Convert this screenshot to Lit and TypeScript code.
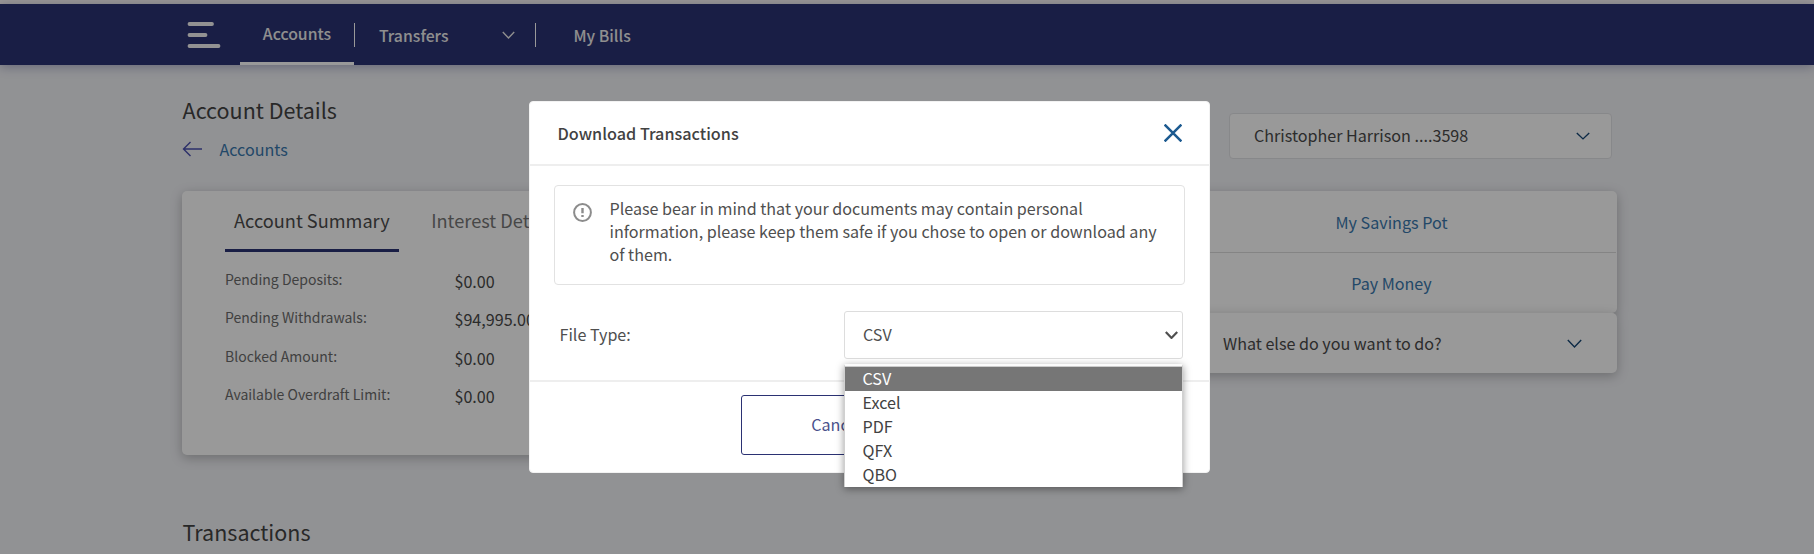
import { LitElement, html, css, svg } from "lit";
import { customElement, property } from "lit/decorators.js";
import { classMap } from "lit/directives/class-map.js";

const chevron = (w: number, h: number, stroke = 1.4) => html`
  <svg width=${w} height=${h} viewBox="0 0 ${w} ${h}" fill="none" stroke="currentColor" stroke-width=${stroke}>
    ${svg`<path d="M0.8 0.9 L${w / 2} ${h - 1.1} L${w - 0.8} 0.9"/>`}
  </svg>`;

@customElement("bank-nav")
class BankNav extends LitElement {
  static styles = css`
    :host { display: block; position: relative; }
    svg { display: block; }
    .strip { height: 4px; background: #fffbfb; }
    .bar {
      display: flex; height: 61px; padding-left: 187px; box-sizing: border-box;
      background: #2b3273; color: #eee; font-size: 15.8px; font-weight: 500;
      box-shadow: 0 2px 10px rgba(43, 50, 115, 0.35);
    }
    .burger { width: 53px; padding-top: 17px; }
    .active { width: 114px; height: 61px; box-sizing: border-box; text-align: center; line-height: 60px; border-bottom: 3px solid #fff; }
    .item { display: flex; align-items: center; height: 62px; box-sizing: border-box; }
    .sep { width: 1px; height: 24px; margin-top: 19px; background: #fff; }
    .transfers { width: 180px; padding: 0 20.5px 0 24px; justify-content: space-between; }
    .bills { padding-left: 37.5px; }
  `;
  render() {
    return html`
      <div class="strip"></div>
      <nav class="bar">
        <div class="burger">
          <svg width="34" height="28" viewBox="0 0 34 28" stroke="#f4f4f4" stroke-width="3.8" stroke-linecap="round">
            <path d="M2.5 3H25M2.5 14H18.5M2.5 25H31.5" />
          </svg>
        </div>
        <div class="active">Accounts</div>
        <div class="sep"></div>
        <div class="item transfers">Transfers ${chevron(13, 8)}</div>
        <div class="sep"></div>
        <div class="item bills">My Bills</div>
      </nav>`;
  }
}

@customElement("summary-card")
class SummaryCard extends LitElement {
  @property({ attribute: false }) rows: [string, string][] = [];
  static styles = css`
    :host { display: block; background: #fff; border-radius: 5px; height: 264px; box-sizing: border-box; padding-left: 43px; box-shadow: 0 3px 12px rgba(0, 0, 0, 0.25); }
    .tabs { display: flex; gap: 23.5px; font-size: 18.2px; }
    .tab { padding: 0 9px; line-height: 58px; color: #777; border-bottom: 3px solid transparent; white-space: nowrap; }
    .tab.on { color: #4c4c4c; border-color: #2b3273; }
    .rows { padding-top: 8px; }
    .row { display: grid; grid-template-columns: 229.5px auto; height: 38.33px; }
    .label { font-size: 14px; line-height: 38px; color: #6c6c6c; }
    .value { font-size: 16.1px; line-height: 42px; color: #484848; }
  `;
  render() {
    return html`
      <div class="tabs">
        <div class="tab on">Account Summary</div>
        <div class="tab">Interest Details</div>
      </div>
      <div class="rows">
        ${this.rows.map(([l, v]) => html`<div class="row"><span class="label">${l}</span><span class="value">${v}</span></div>`)}
      </div>`;
  }
}

@customElement("download-dialog")
class DownloadDialog extends LitElement {
  @property() selected = "CSV";
  @property({ attribute: false }) types: string[] = [];
  static styles = css`
    :host {
      display: flex; flex-direction: column; width: 681px; height: 372px; box-sizing: border-box;
      background: #fff; border: 1px solid #f2f2f2; border-radius: 4px; color: #4f4f4f; font-size: 16.12px;
    }
    svg { display: block; flex: none; }
    header { display: flex; justify-content: space-between; align-items: center; height: 62px; padding: 0 27px 0 27.5px; border-bottom: 2px solid #eee; }
    h2 { margin: 0; font-size: 16.2px; font-weight: 500; line-height: 62px; color: #424242; }
    .notice {
      display: flex; gap: 17.5px; margin: 19px 24px 0 24px; height: 100px; box-sizing: border-box;
      border: 1px solid #e2e2e2; border-radius: 4px; padding: 11px 16px 0 18px;
    }
    .notice svg { margin-top: 6px; }
    .notice p { margin: 0; line-height: 23px; width: 556px; }
    .field { display: flex; justify-content: space-between; margin: 26px 26px 0 29px; }
    label { line-height: 46px; padding-left: .5px; }
    .select { position: relative; width: 339px; height: 48px; box-sizing: border-box; border: 1px solid #ddd; border-radius: 3px; padding: 0 4px 0 18px; display: flex; align-items: center; justify-content: space-between; }
    .value { padding-bottom: 2px; }
    .menu {
      position: absolute; top: 52px; left: -1px; right: -1px; border: 1px solid #d0d0d0; border-top: 2px solid #fbfbfb; border-bottom: 0;
      background: #fff; box-shadow: 0 2px 8px rgba(0, 0, 0, 0.4); z-index: 2;
    }
    .option { height: 24px; line-height: 22px; padding-left: 17.5px; color: #424242; }
    .list { border-top: 1px solid #ccc; }
    .option.on { background: #767676; color: #fff; }
    footer { flex: 1; margin-top: 21px; border-top: 2px solid #eee; padding: 13px 0 0 211px; }
    .cancel { width: 192px; height: 60px; box-sizing: border-box; border: 1px solid #2b3273; border-radius: 3px; background: #fff; color: #4b528c; font: inherit; padding: 0 1px 2px 0; }
  `;
  render() {
    return html`
      <header>
        <h2>Download Transactions</h2>
        <svg width="18" height="18" viewBox="0 0 18 18" stroke="#1c5a90" stroke-width="2.5"><path d="M.6 .6 17.4 17.4M17.4 .6 .6 17.4" /></svg>
      </header>
      <div class="notice">
        <svg width="19" height="19" viewBox="0 0 19 19" fill="none" stroke="#8c8c8c" stroke-width="2">
          <circle cx="9.5" cy="9.5" r="8.4" /><path d="M9.5 4.9v5.3M9.5 12v2.1" stroke-width="2.4" />
        </svg>
        <p>Please bear in mind that your documents may contain personal information, please keep them safe if you chose to open or download any of them.</p>
      </div>
      <div class="field">
        <label>File Type:</label>
        <div class="select">
          <span class="value">${this.selected}</span>${chevron(13, 8, 2.2)}
          <div class="menu"><div class="list">
            ${this.types.map((t) => html`<div class=${classMap({ option: true, on: t === this.selected })}>${t}</div>`)}
          </div></div>
        </div>
      </div>
      <footer><button class="cancel">Cancel</button></footer>`;
  }
}

@customElement("app-root")
class AppRoot extends LitElement {
  static styles = css`
    :host { display: block; position: relative; height: 554px; overflow: hidden; background: #f2f3f7; font-family: "Noto Sans CJK SC", "Source Sans Pro", sans-serif; color: #4a4a4a; font-size: 16.12px; }
    svg { display: block; flex: none; }
    main { width: 1435px; padding-left: 182px; }
    .head { display: flex; justify-content: space-between; height: 126px; }
    h1 { margin: 0; padding-left: .6px; font-size: 21.5px; font-weight: 400; line-height: 40px; color: #444; }
    .title { padding-top: 25px; }
    .back { display: flex; align-items: center; gap: 17.5px; height: 38px; color: #3a78ae; }
    .back svg { color: #4a50b0; }
    .account {
      display: flex; align-items: center; justify-content: space-between; margin: 48px 5px 0 0; width: 383px; height: 46px;
      box-sizing: border-box; background: #fff; border: 1px solid #e2e3e6; border-radius: 4px; padding: 0 21.5px 0 24px;
    }
    .account .name { padding-bottom: 2px; }
    .blue { color: #164775; }
    .cols { display: grid; grid-template-columns: 960px 451px; gap: 24px; height: 264px; }
    .panel { background: #fff; border-radius: 5px; box-shadow: 0 3px 12px rgba(0, 0, 0, 0.25); }
    .links { height: 122px; box-sizing: border-box; text-align: center; color: #3a78ae; padding: 0 1px; }
    .links div { line-height: 61px; height: 61px; box-sizing: border-box; }
    .links div:first-child { line-height: 62px; border-bottom: 1px solid #dcdcdc; height: 62px; }
    .more { display: flex; align-items: center; justify-content: space-between; height: 60px; padding: 0 35.5px 0 57px; }
    .section { margin-top: 57px; }
    .overlay { position: absolute; inset: 0; background: rgba(0, 0, 0, 0.4); padding: 101px 0 0 529px; }
  `;
  private rows: [string, string][] = [
    ["Pending Deposits:", "$0.00"],
    ["Pending Withdrawals:", "$94,995.00"],
    ["Blocked Amount:", "$0.00"],
    ["Available Overdraft Limit:", "$0.00"],
  ];
  render() {
    return html`
      <bank-nav></bank-nav>
      <main>
        <div class="head">
          <div class="title">
            <h1>Account Details</h1>
            <div class="back">
              <svg width="20" height="16" viewBox="0 0 20 16" fill="none" stroke="currentColor" stroke-width="1.4"><path d="M20 8H1.5M8.5 1 1.5 8l7 7" /></svg>
              <span>Accounts</span>
            </div>
          </div>
          <div class="account"><span class="name">Christopher Harrison ....3598</span><span class="blue">${chevron(14, 8)}</span></div>
        </div>
        <div class="cols">
          <summary-card .rows=${this.rows}></summary-card>
          <div>
            <div class="panel links"><div>My Savings Pot</div><div>Pay Money</div></div>
            <div class="panel more"><span>What else do you want to do?</span><span class="blue">${chevron(15, 9)}</span></div>
          </div>
        </div>
        <h1 class="section">Transactions</h1>
      </main>
      <div class="overlay">
        <download-dialog .types=${["CSV", "Excel", "PDF", "QFX", "QBO"]}></download-dialog>
      </div>`;
  }
}
